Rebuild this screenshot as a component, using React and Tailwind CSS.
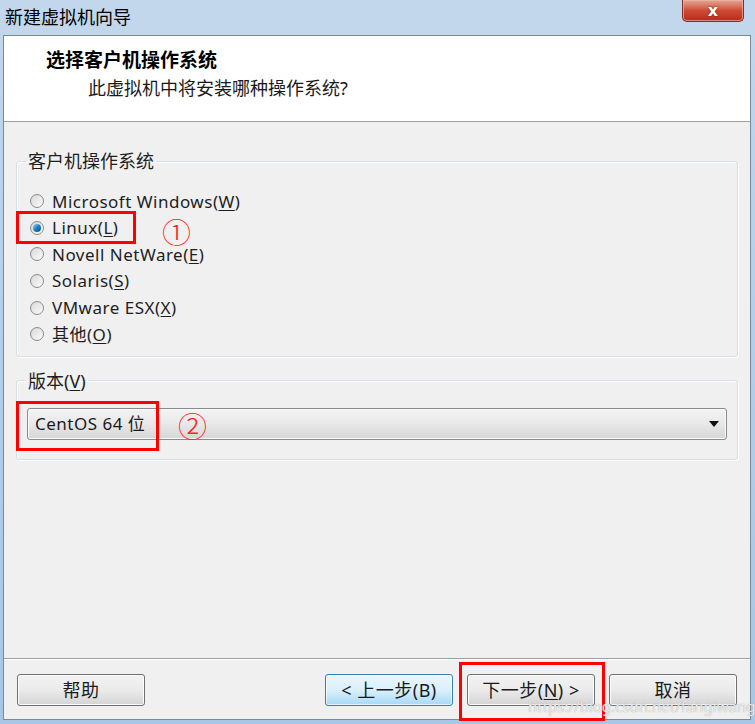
import React from "react";

const FONT = "font-['Noto_Sans','Noto_Sans_CJK_SC',sans-serif]";

const options = [
  { label: "Microsoft Windows", key: "W" },
  { label: "Linux", key: "L", checked: true },
  { label: "Novell NetWare", key: "E" },
  { label: "Solaris", key: "S" },
  { label: "VMware ESX", key: "X" },
  { label: "其他", key: "O" },
];

const Radio = ({ checked }) => (
  <span className="w-[14px] h-[14px] rounded-full border border-[#8c8c8c] bg-gradient-to-br from-[#d4d4d4] to-[#fbfbfb] flex items-center justify-center shrink-0">
    {checked ? (
      <span className="w-[8px] h-[8px] rounded-full bg-gradient-to-br from-[#8fd3f7] via-[#1f7fc0] to-[#0b4c7d]" />
    ) : (
      <span className="w-[10px] h-[10px] rounded-full bg-gradient-to-br from-[#dcdcdc] to-[#f8f8f8]" />
    )}
  </span>
);

const Button = ({ children, active }) => (
  <div
    className={
      active
        ? "w-[128px] h-[32px] rounded-[3px] border border-[#3c7fb1] bg-gradient-to-b from-[#eaf6fd] via-[#d9f0fc] to-[#a7d9f5] flex items-center justify-center text-[18px] tracking-[0.5px] text-[#1a1a1a] shadow-[inset_0_0_0_1px_#ffffffaa]"
        : "w-[128px] h-[32px] rounded-[3px] border border-[#707070] bg-gradient-to-b from-[#f2f2f2] via-[#ebebeb] to-[#d4d4d4] flex items-center justify-center text-[18px] tracking-[0.5px] text-[#1a1a1a] shadow-[inset_0_0_0_1px_#fcfcfc]"
    }
  >
    {children}
  </div>
);

export default function App() {
  return (
    <div className={`relative w-[755px] h-[724px] overflow-hidden bg-gradient-to-b from-[#c3d7ec] via-[#b4cde9] to-[#a9c6e6] ${FONT}`}>
      {/* title bar */}
      <div className="relative h-[35px] flex items-center pl-[5px] text-[18px] text-black">
        新建虚拟机向导
        <div className="absolute left-[682px] top-0 w-[62px] h-[22px] rounded-b-[5px] border border-t-0 border-[#7a3128] bg-gradient-to-b from-[#e5a597] via-[#cf4a33] to-[#b52c1a] flex items-center justify-center shadow-[inset_0_0_0_1px_#f0b7a8aa]">
          <span className="text-white font-bold text-[16px] leading-none font-['DejaVu_Sans',sans-serif] [text-shadow:0_0_2px_#5a1b10]">x</span>
        </div>
      </div>

      {/* window body */}
      <div className="ml-[3px] w-[748px] h-[685px] border border-[#7b8896] flex flex-col">
        <div className="h-[86px] bg-white border-b border-[#a0a0a0] pt-[12px] pl-[42px]">
          <div className="text-[19px] font-bold leading-[24px] text-black">选择客户机操作系统</div>
          <div className="ml-[42px] mt-[4px] text-[18px] leading-[24px] text-[#1a1a1a]">此虚拟机中将安装哪种操作系统?</div>
        </div>

        <div className="flex-1 bg-[#f0f0f0] px-3 pt-[27px]">
          <fieldset className="border border-[#d5dfe5] rounded-[3px] shadow-[inset_1px_1px_0_#fff,1px_1px_0_#fff]">
            <legend className="ml-[9px] px-[2px] text-[18px] leading-[24px] text-[#1e1e1e]">客户机操作系统</legend>
            <div className="pl-[13px] pt-[15px] pb-[8px]">
              {options.map((o) => (
                <div key={o.key} className="h-[26.6px] flex items-center gap-[8px] text-[17px] tracking-[0.5px] text-[#1e1e1e]">
                  <Radio checked={o.checked} />
                  <span>
                    {o.label}(<span className="underline underline-offset-2">{o.key}</span>)
                  </span>
                </div>
              ))}
            </div>
          </fieldset>

          <fieldset className="mt-[12px] border border-[#d5dfe5] rounded-[3px] shadow-[inset_1px_1px_0_#fff,1px_1px_0_#fff]">
            <legend className="ml-[9px] px-[2px] text-[18px] leading-[24px] text-[#1e1e1e]">
              版本(<span className="underline underline-offset-2">V</span>)
            </legend>
            <div className="px-[10px] pt-[15px] pb-[19px]">
              <div className="h-[32px] rounded-[3px] border border-[#8a8a8a] bg-gradient-to-b from-[#f3f3f3] via-[#e8e8e8] to-[#d6d6d6] flex items-center justify-between pl-[7px] pr-[6px] text-[17px] tracking-[0.5px] text-[#1a1a1a] shadow-[inset_0_0_0_1px_#fafafa]">
                <span>CentOS 64 位</span>
                <svg width="12" height="8" viewBox="0 0 12 8">
                  <path d="M1 1h10L6 7z" fill="#111" />
                </svg>
              </div>
            </div>
          </fieldset>
        </div>

        <div className="h-[61px] bg-[#f0f0f0] border-t border-[#a0a0a0] shadow-[inset_0_1px_0_#fff] pt-[15px] pl-[13px] pr-[13px] flex justify-between">
          <Button>帮助</Button>
          <div className="flex gap-[14px]">
            <Button active>&lt; 上一步(B)</Button>
            <Button>
              下一步(<span className="underline underline-offset-2">N</span>) &gt;
            </Button>
            <Button>取消</Button>
          </div>
        </div>
      </div>

      {/* annotations */}
      <div className="absolute left-[16px] top-[211px] w-[120px] h-[33px] border-[3px] border-[#ff0000]" />
      <div className="absolute left-[162px] top-[215px] text-[29px] leading-[32px] text-[#ff2020] font-['Noto_Sans_CJK_SC',sans-serif] font-light">①</div>
      <div className="absolute left-[16px] top-[401px] w-[143px] h-[50px] border-[3px] border-[#ff0000]" />
      <div className="absolute left-[178px] top-[409px] text-[29px] leading-[32px] text-[#ff2020] font-['Noto_Sans_CJK_SC',sans-serif] font-light">②</div>
      <div className="absolute left-[459px] top-[662px] w-[146px] h-[59px] border-[3px] border-[#ff0000]" />
      <div className="absolute left-[528px] top-[695px] text-[15px] leading-[22px] text-white/80 [text-shadow:0_0_1px_#888]">https://blog.csdn.net/fangiwang</div>
    </div>
  );
}
